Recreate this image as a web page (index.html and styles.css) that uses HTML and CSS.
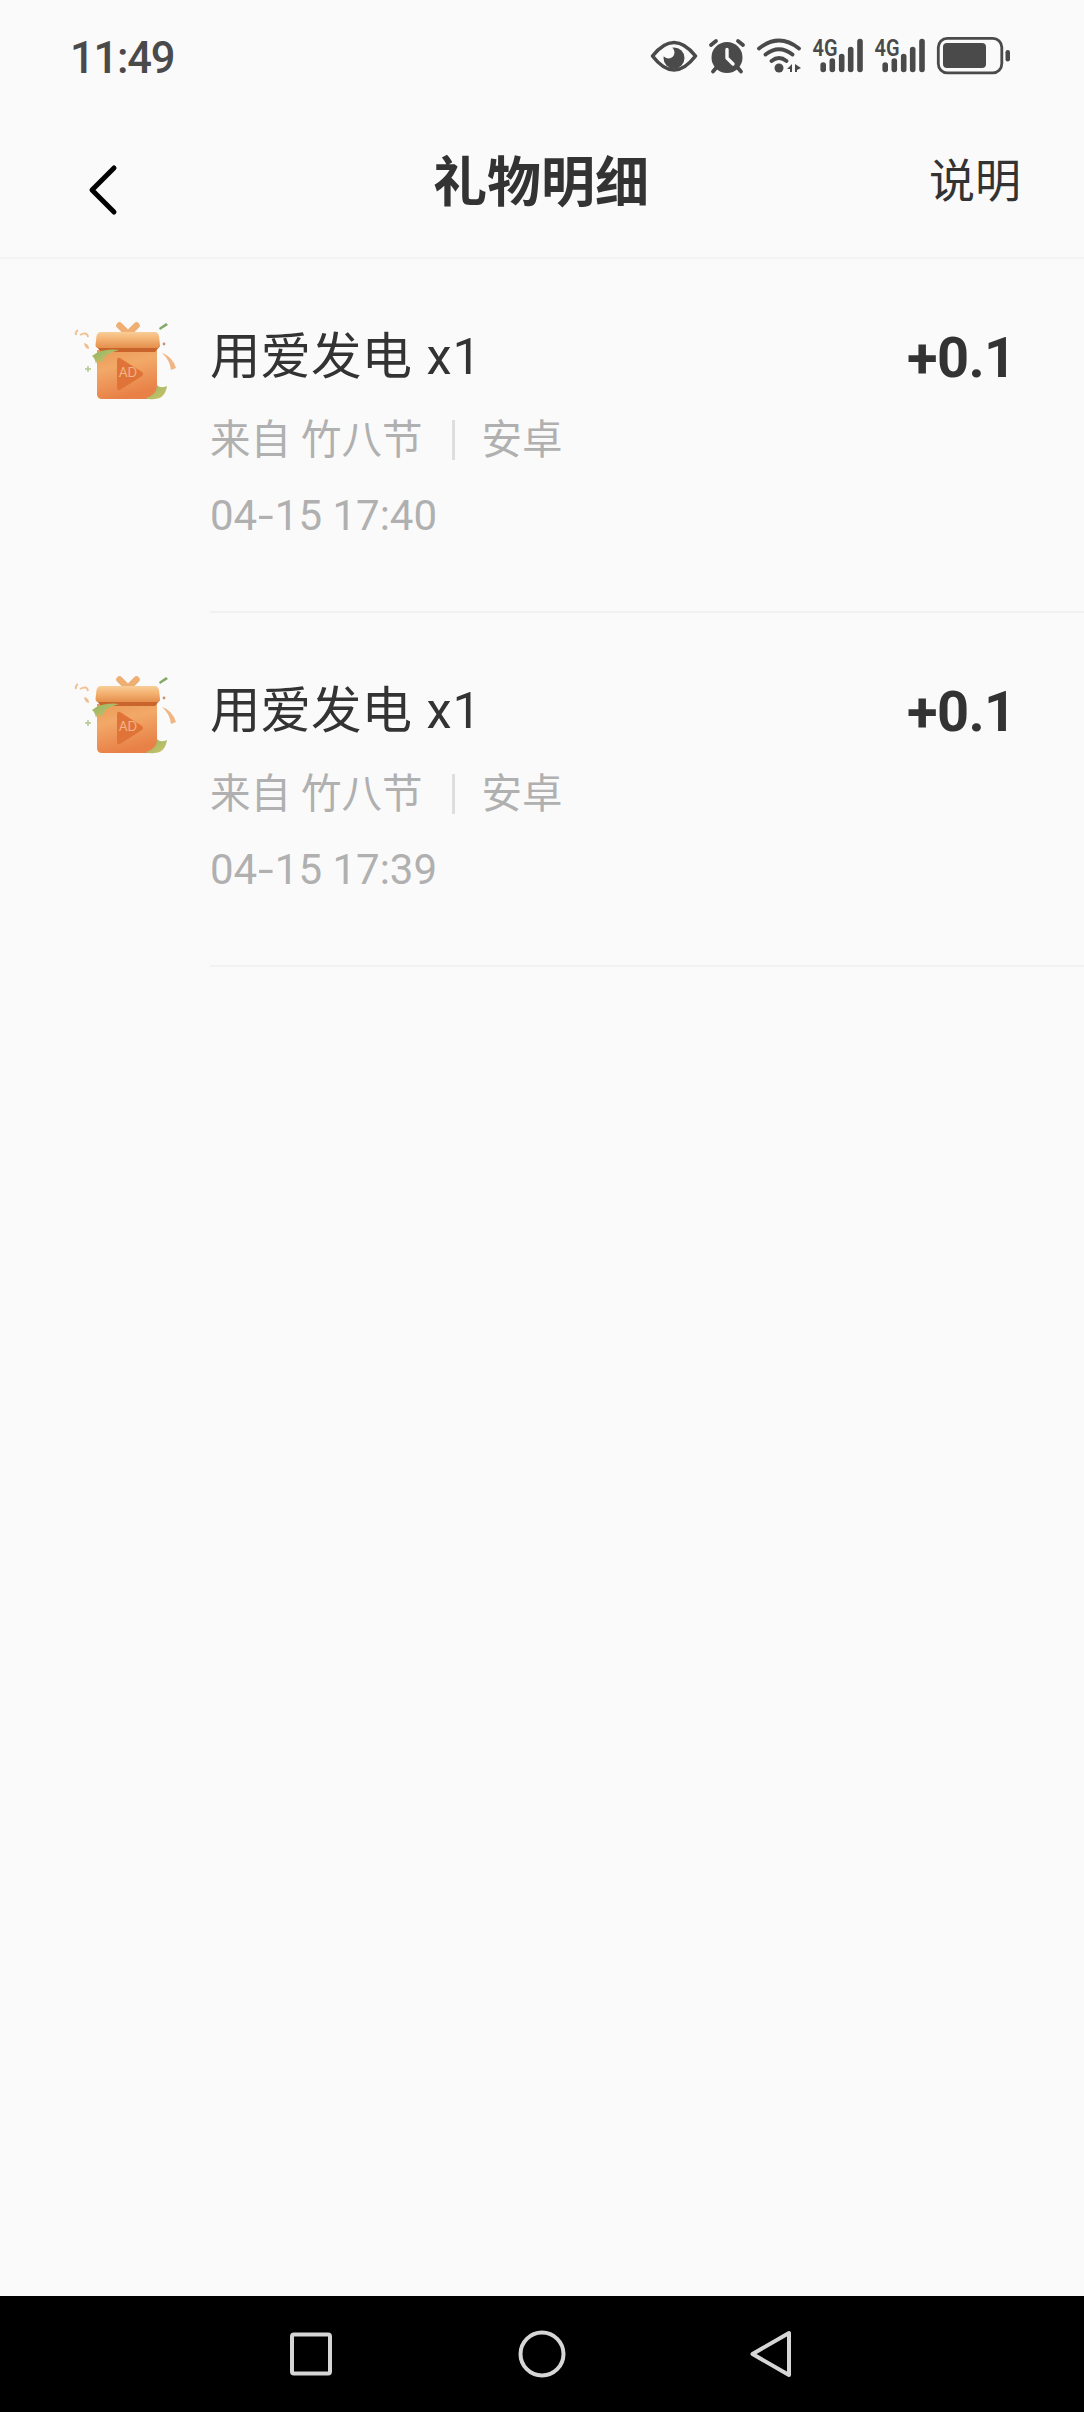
FILE: index.html
```html
<!DOCTYPE html>
<html lang="zh-CN">
<head>
    <meta charset="UTF-8">
    <title>礼物明细</title>
    <link rel="stylesheet" href="styles.css">
</head>
<body>
    <!-- shared icons -->
    <svg class="defs" width="0" height="0">
        <defs>
            <linearGradient id="box" x1="0" y1="0" x2="0.3" y2="1">
                <stop offset="0" stop-color="#eb9a58"/>
                <stop offset="0.4" stop-color="#f2a968"/>
                <stop offset="1" stop-color="#e88047"/>
            </linearGradient>
            <linearGradient id="lid" x1="0" y1="0" x2="0" y2="1">
                <stop offset="0" stop-color="#f8cd96"/>
                <stop offset="0.45" stop-color="#f3b272"/>
                <stop offset="1" stop-color="#e58f4c"/>
            </linearGradient>
            <linearGradient id="leaf" x1="0" y1="0" x2="1" y2="1">
                <stop offset="0" stop-color="#93b565"/>
                <stop offset="1" stop-color="#d0c468"/>
            </linearGradient>
        </defs>
        <symbol id="gift" viewBox="0 0 130 120">
            <path d="M59.500 25.500L68 34L76.500 25.500" fill="none" stroke="#efae72" stroke-width="6.500" stroke-linecap="round" stroke-linejoin="round"/>
            <path d="M37 50h60v44q0 5-5 5H42q-5 0-5-5z" fill="url(#box)"/>
            <path d="M36 46h64l-5 6H41z" fill="#c9652c"/>
            <path d="M41 32h54q3 0 4 4l1 9q0 3-3 3H38.500q-3 0-3-3l1-9q1-4 4.500-4z" fill="url(#lid)"/>
            <path d="M57 60q0-3 3-2l22 14q2 2 0 4L60 90q-3 1-3-2z" fill="#e07438"/>
            <path d="M59 50Q42 48 32 56q3 2 4 8 1-4 4-4-1 3 2 2 3-9 17-12z" fill="url(#leaf)"/>
            <path d="M97 85q3 4 10 1-2 13-13 13-5 1-8-1 11-3 11-13z" fill="url(#leaf)"/>
            <path d="M18 30q-3 2-2 5M20 35q7-4 8 2" fill="none" stroke="#f1c295" stroke-width="2"/>
            <path d="M24 43q5 1 5 6l-3-1q-2-3-2-5z" fill="#f0bc8d"/>
            <path d="M99 28l7-5 2 2-8 5z" fill="#84a866"/>
            <path d="M102 53q10 3 14 15l-5 2q-1-10-9-17z" fill="#f0b580"/>
            <circle cx="104" cy="44" r="1.400" fill="#cf9069"/>
            <path d="M28 66v6M25 69h6" stroke="#b4c890" stroke-width="1.500"/>
        </symbol>
        <symbol id="bars" viewBox="0 0 62 44">
            <path d="M15.200 31v4.500M24.300 27v8.500M33.700 22.500v13M42.700 15.500v20M52 7.500v28" fill="none" stroke="#4a4a4a" stroke-width="5.600" stroke-linecap="round"/>
        </symbol>
    </svg>

    <div class="phone">
        <div class="status-bar">
            <span class="clock">11:49</span>
            <div class="status-icons">
                <svg width="58" height="44" viewBox="0 0 58 44">
                    <path d="M6.500 22Q28 -5 49.500 22Q28 50 6.500 22z" fill="none" stroke="#4a4a4a" stroke-width="3.600" stroke-linejoin="round"/>
                    <circle cx="28" cy="24" r="10.500" fill="#4a4a4a"/>
                    <circle cx="22.500" cy="18.500" r="6" fill="#fafafa"/>
                </svg>
                <svg width="46" height="44" viewBox="0 0 46 44">
                    <circle cx="23" cy="23.500" r="15.500" fill="#4a4a4a"/>
                    <path d="M7 11l5-4M39 11l-5-4M12 34l-3 3.500M34 34l3 3.500" stroke="#4a4a4a" stroke-width="3.800" stroke-linecap="round"/>
                    <path d="M23 15.500v8.500l6 6" fill="none" stroke="#fafafa" stroke-width="3.400" stroke-linecap="round" stroke-linejoin="round"/>
                </svg>
                <svg width="58" height="44" viewBox="0 0 58 44">
                    <path d="M9 14.500Q29 -1.500 49 14.500M15.500 20.500Q29 10 42.500 20.500M21.500 27Q29 21 36.500 27" fill="none" stroke="#4a4a4a" stroke-width="3.800" stroke-linecap="round"/>
                    <circle cx="29" cy="34" r="4.500" fill="#4a4a4a"/>
                    <path d="M37 35l5-5v8h-2v-3zM45 30l6 4-4 2v2h-2z" fill="#4a4a4a"/>
                </svg>
                <svg width="62" height="44">
                    <use href="#bars"/>
                    <text class="net" x="4.500" y="22" textLength="25" lengthAdjust="spacingAndGlyphs">4G</text>
                </svg>
                <svg width="62" height="44">
                    <use href="#bars"/>
                    <text class="net" x="4.500" y="22" textLength="25" lengthAdjust="spacingAndGlyphs">4G</text>
                </svg>
                <svg width="84" height="44" viewBox="0 0 84 44">
                    <rect x="6.300" y="4.300" width="63.500" height="34.500" rx="9" fill="none" stroke="#4a4a4a" stroke-width="2.800"/>
                    <rect x="11" y="9" width="43" height="25" rx="4" fill="#4a4a4a"/>
                    <rect x="73.500" y="16" width="4.500" height="11.500" rx="2.200" fill="#4a4a4a"/>
                </svg>
            </div>
        </div>

        <div class="header">
            <svg class="back" width="40" height="60" viewBox="0 0 40 60">
                <path d="M27 8L5 30L27 52" fill="none" stroke="#000" stroke-width="5" stroke-linecap="round" stroke-linejoin="round"/>
            </svg>
            <h1>礼物明细</h1>
            <span class="help">说明</span>
        </div>

        <ul class="list">
            <li class="item">
                <svg class="gift" width="130" height="120">
                    <use href="#gift"/>
                    <text class="gift-ad" x="59" y="77">AD</text>
                </svg>
                <div class="info">
                    <div class="name">用爱发电 <span class="count">x1</span></div>
                    <div class="from"><span>来自 竹八节</span><i class="split"></i><span>安卓</span></div>
                    <div class="time">04<span class="dash">-</span>15 17:40</div>
                </div>
                <div class="amount">+0.1</div>
            </li>
            <li class="item">
                <svg class="gift" width="130" height="120">
                    <use href="#gift"/>
                    <text class="gift-ad" x="59" y="77">AD</text>
                </svg>
                <div class="info">
                    <div class="name">用爱发电 <span class="count">x1</span></div>
                    <div class="from"><span>来自 竹八节</span><i class="split"></i><span>安卓</span></div>
                    <div class="time">04<span class="dash">-</span>15 17:39</div>
                </div>
                <div class="amount">+0.1</div>
            </li>
        </ul>

        <div class="nav-bar">
            <svg width="48" height="48" viewBox="0 0 48 48">
                <rect x="5" y="4.500" width="38" height="39" rx="2" fill="none" stroke="#d6d6d6" stroke-width="4"/>
            </svg>
            <svg width="48" height="48" viewBox="0 0 48 48">
                <circle cx="24" cy="24" r="21.500" fill="none" stroke="#d6d6d6" stroke-width="4"/>
            </svg>
            <svg width="48" height="48" viewBox="0 0 48 48">
                <path d="M3.500 24L40 3v42z" fill="none" stroke="#d6d6d6" stroke-width="4" stroke-linejoin="round"/>
            </svg>
        </div>
    </div>
</body>
</html>
```
FILE: styles.css
```css
body {
    margin: 0;
    background-color: #fafafa;
    font-family: Roboto, "Noto Sans CJK SC", sans-serif;
    color: #333;
}

.defs {
    display: block;
}

.phone {
    display: flex;
    flex-direction: column;
    width: 1084px;
    height: 2412px;
}

.status-bar {
    display: flex;
    justify-content: space-between;
    align-items: center;
    box-sizing: border-box;
    height: 112px;
    padding: 0 68px 0 70px;
}

.clock {
    font-size: 43.5px;
    font-weight: 500;
    line-height: 50px;
    letter-spacing: -1.2px;
    color: #4a4a4a;
    margin-top: 5px;
}

.status-icons {
    display: flex;
}

.net {
    font-size: 24px;
    font-weight: 600;
    fill: #4a4a4a;
}

.header {
    display: flex;
    align-items: center;
    justify-content: space-between;
    box-sizing: border-box;
    height: 147px;
    padding: 0 63px 10px 87px;
    border-bottom: 2px solid #f3f3f3;
}

.header h1 {
    margin: 8px 0 0 26px;
    font-size: 54px;
    font-weight: 700;
    line-height: 70px;
}

.back {
    margin-top: 20px;
}

.help {
    margin-top: 2px;
    font-size: 46px;
    line-height: 60px;
}

.list {
    flex: 1;
    list-style: none;
    margin: 0;
    padding: 0;
}

.item {
    display: flex;
    height: 354px;
    padding-left: 60px;
}

.gift {
    margin-top: 41px;
}

.gift-ad {
    font-family: Lato, sans-serif;
    font-size: 12.5px;
    fill: #f3b68a;
}

.info {
    flex: 1;
    box-sizing: border-box;
    margin-left: 20px;
    padding-top: 63px;
    border-bottom: 2px solid #f1f1f1;
}

.name {
    font-size: 50.5px;
    line-height: 70px;
}

.count {
    margin-left: 2px;
    letter-spacing: 1px;
}

.from {
    display: flex;
    align-items: center;
    margin-top: 18px;
    font-size: 40.5px;
    line-height: 60px;
    color: #b0b0b0;
}

.split {
    width: 3px;
    height: 40px;
    margin: 0 27px 0 29px;
    background-color: #dedede;
}

.time {
    margin-top: 18px;
    font-size: 42px;
    line-height: 56px;
    color: #b0b0b0;
}

.dash {
    display: inline-block;
    margin: 0 3px;
    transform: scaleX(1.35);
}

.amount {
    box-sizing: border-box;
    width: 177px;
    padding-top: 64px;
    font-size: 56px;
    font-weight: 700;
    line-height: 70px;
    letter-spacing: -0.6px;
    border-bottom: 2px solid #f1f1f1;
}

.nav-bar {
    display: flex;
    justify-content: space-between;
    align-items: center;
    box-sizing: border-box;
    height: 116px;
    padding: 0 287px;
    background-color: #000;
}
```
